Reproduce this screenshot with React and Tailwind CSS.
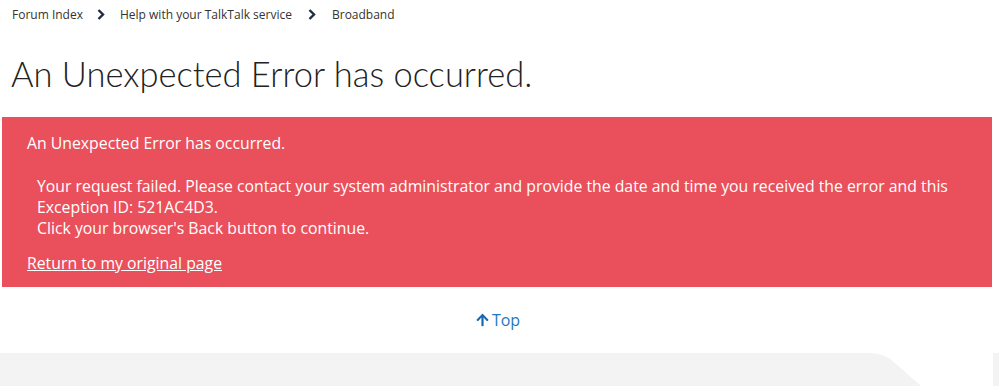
import React from "react";

function Chevron({ className }) {
  return (
    <svg width="8" height="11" viewBox="0 0 8 11" className={className}>
      <path d="M1.5 1 L6 5.5 L1.5 10" fill="none" stroke="#1f2a44" strokeWidth="2.4" />
    </svg>
  );
}

export default function App() {
  return (
    <div className="relative w-[999px] h-[386px] bg-white overflow-hidden" style={{ fontFamily: '"Open Sans", sans-serif' }}>
      <nav className="flex items-center h-[29px] pl-[12px] text-[12px] text-[#333]">
        <span>Forum Index</span>
        <Chevron className="ml-[14px] mr-[15px]" />
        <span>Help with your TalkTalk service</span>
        <Chevron className="ml-[16px] mr-[16px]" />
        <span>Broadband</span>
      </nav>
      <h1 className="pl-[11px] pt-[25px] h-[88px] text-[34.5px] leading-[40px] font-light text-[#222]" style={{ fontFamily: 'Lato, sans-serif' }}>
        An Unexpected Error has occurred.
      </h1>
      <div className="ml-[2px] w-[990px] h-[170px] bg-[#e9505b] text-white text-[15.8px] pl-[25px] pt-[16px]">
        <div className="leading-[21px]">An Unexpected Error has occurred.</div>
        <div className="pl-[10px] mt-[22px] leading-[21px]">
          <div>Your request failed. Please contact your system administrator and provide the date and time you received the error and this</div>
          <div>Exception ID: 521AC4D3.</div>
          <div>Click your browser's Back button to continue.</div>
        </div>
        <div className="mt-[14px] leading-[21px] underline">Return to my original page</div>
      </div>
      <div className="flex justify-center pt-[21px] pr-[3px] text-[16px] text-[#1e78c2]">
        <span className="flex items-center gap-[3px]">
          <svg width="13" height="14" viewBox="0 0 448 512" fill="#1668b0"><path d="M34.9 289.5l-22.2-22.2c-9.4-9.4-9.4-24.6 0-33.9L207 39c9.4-9.4 24.6-9.4 33.9 0l194.3 194.3c9.4 9.4 9.4 24.6 0 33.9L413 289.4c-9.5 9.5-25 9.3-34.3-.4L264 168.6V456c0 13.3-10.7 24-24 24h-32c-13.3 0-24-10.7-24-24V168.6L69.2 289.1c-9.3 9.8-24.8 10-34.3.4z"/></svg>
          Top
        </span>
      </div>
      <div className="absolute left-0 top-[353px] w-[999px] h-[33px]">
        <svg width="999" height="33" viewBox="0 0 999 33">
          <path d="M0 0 H870 Q885 0 895 10 L921 33 H0 Z" fill="#f3f3f3" />
          <rect x="993" y="0" width="6" height="33" fill="#f3f3f3" />
        </svg>
      </div>
    </div>
  );
}
